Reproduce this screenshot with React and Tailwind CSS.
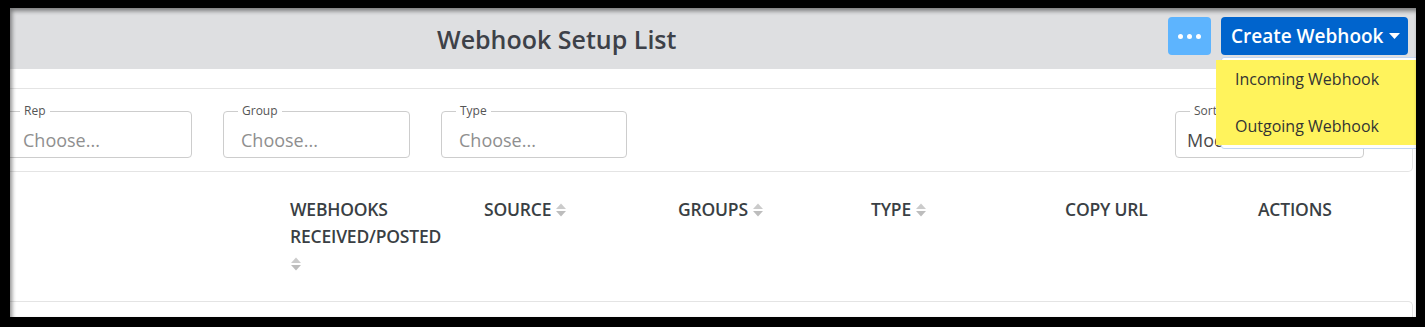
import { useState } from "react";

function SortIcon() {
  return (
    <svg width="12" height="16" viewBox="0 0 12 16" className="inline-block flex-shrink-0">
      <path d="M6 1.5 L11 7 H1 Z" fill="#cbcbcb" />
      <path d="M1 9 H11 L6 14.5 Z" fill="#bdbdbd" />
    </svg>
  );
}

function FilterBox({ label, value, placeholder = "Choose...", className = "" }) {
  return (
    <div className={`relative h-[47px] border border-[#cdcdcd] rounded-[4px] pt-[17px] ${className}`}>
      <span className="absolute -top-[8px] left-[14px] px-[4px] bg-white text-[12px] leading-[14px] text-[#555]">
        {label}
      </span>
      <div className={`text-[18px] leading-[22px] whitespace-nowrap overflow-hidden ${value ? "text-[#4a4a4a]" : "text-[#8f8f8f]"}`}>
        {value || placeholder}
      </div>
    </div>
  );
}

const columns = [
  { title: "WEBHOOKS RECEIVED/POSTED", sort: true, stack: true },
  { title: "SOURCE", sort: true },
  { title: "GROUPS", sort: true },
  { title: "TYPE", sort: true },
  { title: "COPY URL" },
  { title: "ACTIONS" },
];

export default function App() {
  const [open] = useState(true);

  return (
    <div className="relative w-[1425px] h-[327px] overflow-hidden bg-white font-['Open_Sans',sans-serif]">
      {/* header */}
      <header className="relative z-10 h-[69px] bg-[#dedfe1] flex items-start pl-[437px] pr-[17px]">
        <h1 className="flex-1 mt-[24px] text-[25px] leading-[30px] font-semibold text-[#3d4148]">
          Webhook Setup List
        </h1>
        <button className="mt-[17px] w-[43px] h-[38px] rounded-[4px] bg-[#5db4fe] flex items-center justify-center gap-[4px]">
          <span className="w-[5px] h-[5px] rounded-full bg-white" />
          <span className="w-[5px] h-[5px] rounded-full bg-white" />
          <span className="w-[5px] h-[5px] rounded-full bg-white" />
        </button>
        <div className="relative mt-[17px] ml-[10px]">
          <button className="w-[187px] h-[38px] rounded-[4px] bg-[#0064cd] flex items-center pl-[10px] text-white text-[19px] font-semibold whitespace-nowrap">
            Create Webhook
            <svg width="11" height="6" viewBox="0 0 11 6" className="ml-[5px]">
              <path d="M0 0 H11 L5.5 6 Z" fill="#fff" />
            </svg>
          </button>
          {open && (
            <div className="absolute top-[40px] left-0 w-[205px] h-[92px] bg-white border border-[#c2d6f3] rounded-[3px]">
              <div className="absolute -left-[6px] top-[2px] w-[210px] h-[85px] bg-[#fff35c] pl-[19px] pt-[8px] flex flex-col gap-[25px] text-[16px] leading-[22px] text-[#333]">
                <span>Incoming Webhook</span>
                <span>Outgoing Webhook</span>
              </div>
            </div>
          )}
        </div>
      </header>

      <div className="pt-[19px] pr-[12px]">
        {/* filters */}
        <div className="h-[84px] border border-l-0 border-[#e4e4e4] rounded-r-[5px] pt-[22px] pl-[5px] pr-[48px] flex">
          <FilterBox label="Rep" className="w-[187px] pl-[17px]" />
          <FilterBox label="Group" className="w-[187px] ml-[31px] pl-[17px]" />
          <FilterBox label="Type" className="w-[186px] ml-[31px] pl-[17px]" />
          <FilterBox label="Sort" value="Modified Date" className="w-[189px] ml-auto pl-[11px]" />
        </div>

        {/* table head */}
        <div className="h-[129px] grid grid-cols-[290px_194px_194px_193px_194px_193px_1fr] pt-[24px]">
          <div />
          {columns.map((c) => (
            <div key={c.title} className="pr-[16px] text-[17.5px] leading-[27px] font-semibold text-[#3a3f44] tracking-[-0.2px]">
              {c.stack ? (
                <>
                  <div>{c.title}</div>
                  <div className="flex items-center h-[27px]">
                    <SortIcon />
                  </div>
                </>
              ) : (
                <span className="inline-flex items-center gap-[4px] whitespace-nowrap">
                  {c.title}
                  {c.sort && <SortIcon />}
                </span>
              )}
            </div>
          ))}
        </div>

        {/* body card */}
        <div className="h-[40px] border-t border-r border-[#e4e4e4] rounded-tr-[5px]" />
      </div>

      {/* screenshot frame */}
      <div className="pointer-events-none absolute inset-0 z-20 border-t-[8px] border-l-[10px] border-r-[9px] border-b-[10px] border-black">
        <div className="absolute inset-0 shadow-[inset_2px_3px_4px_rgba(0,0,0,0.45)]" />
      </div>
    </div>
  );
}
